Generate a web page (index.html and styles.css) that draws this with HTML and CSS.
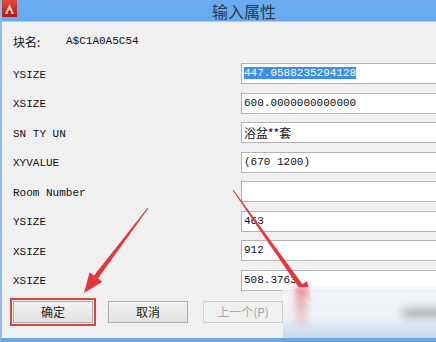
FILE: index.html
```html
<!DOCTYPE html>
<html lang="zh">

<head>
    <meta charset="UTF-8">
    <title>输入属性</title>
    <link rel="stylesheet" href="styles.css">
</head>

<body>
    <div class="window">
        <!-- 标题栏 -->
        <div class="titlebar">
            <svg class="logo" width="15" height="17" viewBox="0 0 15 17">
                <defs>
                    <linearGradient id="lg" x1="0" y1="0" x2="0" y2="1">
                        <stop offset="0" stop-color="#e8473c" />
                        <stop offset="1" stop-color="#b51818" />
                    </linearGradient>
                </defs>
                <rect x="0" y="0" width="15" height="17" fill="url(#lg)" />
                <path d="M7.5 4 L12 14 L9.6 14 L7.5 9 L5.4 14 L3 14 Z" fill="#f7d2c8" />
                <path d="M5.6 12 L9.4 12 L9 11 L6 11 Z" fill="#b51818" />
            </svg>
            <span class="title">输入属性</span>
        </div>

        <div class="content">
            <div class="blockname">
                <span class="bn-label">块名:</span>
                <span class="bn-value">A$C1A0A5C54</span>
            </div>

            <div class="attrs">
                <div class="row">
                    <span class="label">YSIZE</span>
                    <div class="field"><span class="sel">447.0588235294128</span></div>
                </div>
                <div class="row">
                    <span class="label">XSIZE</span>
                    <div class="field">600.0000000000000</div>
                </div>
                <div class="row">
                    <span class="label">SN TY UN</span>
                    <div class="field cjk">浴盆**套</div>
                </div>
                <div class="row">
                    <span class="label">XYVALUE</span>
                    <div class="field">(670 1200)</div>
                </div>
                <div class="row">
                    <span class="label">Room Number</span>
                    <div class="field"></div>
                </div>
                <div class="row">
                    <span class="label">YSIZE</span>
                    <div class="field">463</div>
                </div>
                <div class="row">
                    <span class="label">XSIZE</span>
                    <div class="field">912</div>
                </div>
                <div class="row">
                    <span class="label">XSIZE</span>
                    <div class="field">508.3763</div>
                </div>
            </div>

            <div class="buttons">
                <button class="btn marked">确定</button>
                <button class="btn">取消</button>
                <button class="btn disabled">上一个(P)</button>
            </div>
        </div>

        <!-- 红色箭头 -->
        <svg class="arrows" width="436" height="342" viewBox="0 0 436 342">
            <polygon fill="#e2383a"
                points="148.4,208.3 98,278.5 102.4,281.8 84,293 89.6,272.2 94,275.5 147.6,207.7" />
            <polygon fill="#e2383a"
                points="233.4,189.7 302.5,284.2 307,281 312,302 294,290.2 298.5,287 232.6,190.3" />
        </svg>

        <!-- 水印模糊 -->
        <div class="watermark">
            <div class="smear-red"></div>
            <div class="smear-dark"></div>
        </div>
    </div>
</body>

</html>
```

FILE: styles.css
```css
/* 초기화 */
* {
    box-sizing: border-box;
}

body {
    margin: 0;
    background: #f0f0f0;
}

/* 窗口 */
.window {
    position: relative;
    width: 436px;
    height: 342px;
    overflow: hidden;
    background: #f0f0f0;
    border-left: 2px solid #8dbbec;
    border-bottom: 4px solid #6aa6e6;
}

.titlebar {
    height: 22px;
    background: #69abf0;
    display: flex;
    align-items: center;
    position: relative;
    border-bottom: 1px solid #a9cdf4;
}

.logo {
    margin-left: 0;
    align-self: flex-start;
}

.title {
    position: absolute;
    left: 0;
    right: 0;
    text-align: center;
    padding-left: 50px;
    font-family: "Noto Sans CJK SC", sans-serif;
    font-size: 16px;
    color: #2e3a4a;
    line-height: 22px;
}

.content {
    padding: 9px 0 0 11px;
}

.blockname {
    height: 20px;
    display: flex;
    align-items: center;
    font-size: 11px;
    color: #111;
}

.bn-label {
    font-family: "Noto Sans CJK SC", sans-serif;
    font-size: 12px;
    width: 53px;
}

.bn-value {
    font-family: "Liberation Mono", monospace;
}

.attrs {
    margin-top: 12px;
    display: flex;
    flex-direction: column;
    gap: 8.5px;
}

.row {
    display: flex;
    align-items: center;
    height: 21px;
}

.label {
    width: 228px;
    flex-shrink: 0;
    padding-top: 2px;
    font-family: "Liberation Mono", monospace;
    font-size: 11px;
    color: #111;
}

.field {
    width: 220px;
    height: 21px;
    flex-shrink: 0;
    background: #fff;
    border: 1px solid #b4b4b4;
    padding: 0 2px;
    font-family: "Liberation Mono", monospace;
    font-size: 11px;
    line-height: 19px;
    color: #111;
    white-space: nowrap;
}

.field.cjk {
    font-family: "Noto Sans CJK SC", sans-serif;
    font-size: 12px;
}

.sel {
    background: #3d8ee6;
    color: #fff;
}

/* 按钮 */
.buttons {
    display: flex;
    gap: 15px;
    margin-top: 10px;
}

.btn {
    width: 80px;
    height: 22px;
    padding: 0;
    background: linear-gradient(#f2f2f2, #e2e2e2);
    border: 1px solid #adadad;
    font-family: "Noto Sans CJK SC", sans-serif;
    font-size: 12px;
    color: #222;
}

.btn.marked {
    outline: 2px solid #d8453f;
    outline-offset: 1px;
}

.btn.disabled {
    color: #a8a8a8;
    border-color: #d0d0d0;
    background: #f0f0f0;
}

/* 覆盖层 */
.arrows {
    position: absolute;
    left: -2px;
    top: 0;
    pointer-events: none;
}

.watermark {
    position: absolute;
    left: 281px;
    top: 287px;
    width: 160px;
    height: 51px;
    background: linear-gradient(rgba(244, 246, 250, 0.85), rgba(236, 241, 247, 0.95) 60%, #c6d8ec);
}

.smear-red {
    position: absolute;
    left: 12px;
    top: 0;
    width: 12px;
    height: 40px;
    background: linear-gradient(rgba(226, 80, 80, 0.55), rgba(226, 80, 80, 0.1));
    filter: blur(3px);
}

.smear-dark {
    position: absolute;
    left: 120px;
    top: 22px;
    width: 50px;
    height: 8px;
    background: rgba(90, 90, 90, 0.5);
    filter: blur(4px);
}
```
